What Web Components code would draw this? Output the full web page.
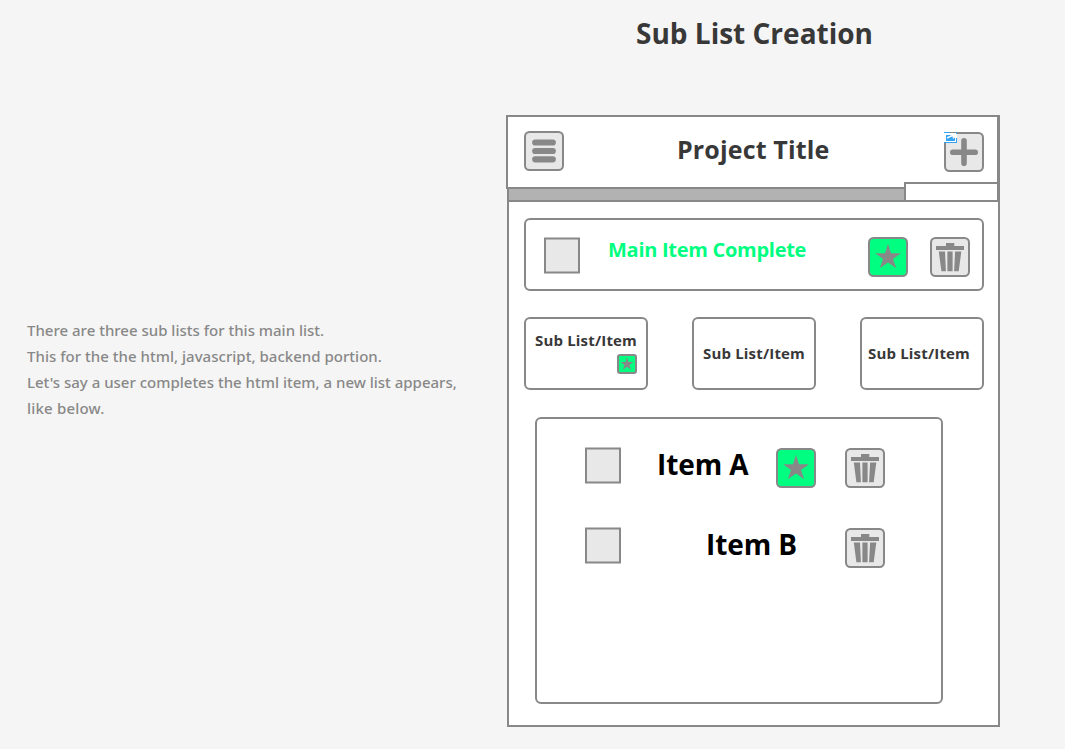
<!DOCTYPE html>
<html lang="en"><head><meta charset="utf-8"><title>Sub List Creation</title>
<style>html,body{margin:0}body{background:#f5f5f5;font-family:"Open Sans","Noto Sans",sans-serif}</style></head>
<body><sublist-page></sublist-page>
<script>
const define=(name,html,setup)=>{
  const t=document.createElement('template');t.innerHTML=html;
  customElements.define(name,class extends HTMLElement{
    constructor(){super();this.attachShadow({mode:'open'}).append(t.content.cloneNode(true));}
    connectedCallback(){if(setup)setup(this,this.shadowRoot);}
  });
};
const shapes={
  menu:'<path d="M11.2 11.5h17.6M11.2 20h17.6M11.2 28.3h17.6" stroke="#888" stroke-width="6.2" stroke-linecap="round"/>',
  plus:'<path d="M8.8 20.2h22.4M20 8.8v22.4" stroke="#888" stroke-width="5.6" stroke-linecap="round"/>',
  star:'<path d="M20 6.7 23 16.2H33L25 22 28.2 31.3 20 25.6 11.8 31.3 15 22 7.2 16.2H17Z" fill="#888"/>',
  trash:'<path d="M6 9h10V6h8.3v3H34v4H6ZM8.8 14.6h6.2L15.9 34.2H11.4ZM17.4 14.6h5.2v19.6h-5.2ZM25.1 14.6h6.2L28.7 34.2H24.1Z" fill="#888"/>'
};
define('tool-icon','<style>:host{display:block;flex:none;width:40px;height:40px}:host([small]){width:20px;height:20px}svg{display:block;width:100%;height:100%}</style><svg viewBox="0 0 40 40"></svg>',(el,r)=>{
  const k=el.getAttribute('kind'),s=el.hasAttribute('small');
  r.querySelector('svg').innerHTML=`<rect x="${s?2:1}" y="${s?2:1}" width="${s?36:38}" height="${s?36:38}" rx="4.5" fill="${k==='star'?'#00ff80':'#e8e8e8'}" stroke="#888" stroke-width="${s?4:2}"/>`+shapes[k];
});
define('check-box','<style>:host{display:block;flex:none;width:36px;height:37px}svg{display:block}</style><svg width="36" height="37"><rect x="1" y="1.5" width="34" height="34" fill="#e8e8e8" stroke="#888" stroke-width="2"/></svg>');
define('text-label','<style>:host{display:block;flex:none;white-space:nowrap;font-weight:700;color:#383838}</style><slot></slot>');
define('outline-card','<style>:host{display:block;box-sizing:border-box;border:2px solid #888;border-radius:6px;background:#fff}</style><slot></slot>');
define('link-badge','<style>:host{display:block;width:13px;height:11px}svg{display:block}</style><svg width="13" height="11"><path fill="#fff" d="M0 1h13v10H0z"/><path fill="#33a3f4" d="M0 0h6v1H0zM0 10h13v1H0zM12 6h1v5h-1zM12 0h1v2h-1zM2 3h9v6H2z"/><path d="M3 5.8C5 6 6 3.6 9 3.8" fill="none" stroke="#fff" stroke-width="1.6"/><path d="M8 1l4.5 3L9 7z" fill="#fff"/></svg>');
define('progress-track',`<style>:host{display:flex;align-items:flex-end;height:20px}
.done{flex:none;box-sizing:border-box;width:397px;height:15px;background:#b2b2b2;border:2px solid #888;border-right:0}
.rest{flex:none;box-sizing:border-box;width:95px;height:20px;background:#fff;border:2px solid #888}</style><div class="done"></div><div class="rest"></div>`);
define('project-header',`<style>:host{display:flex;align-items:flex-start;box-sizing:border-box;width:493px;height:74px;border:2px solid #888;background:#fff;padding:14px 13px 0 16px}
text-label{font-size:25px;line-height:34px;margin:1px 0 0 113px;letter-spacing:var(--ls-project)}
.add{position:relative;margin:1px 0 0 auto}.add link-badge{position:absolute;left:0;top:0}</style>
<tool-icon kind="menu"></tool-icon><text-label>Project Title</text-label><div class="add"><tool-icon kind="plus"></tool-icon><link-badge></link-badge></div>`);
define('main-item',`<style>outline-card{width:460px;height:73px}.r{display:flex;align-items:flex-start;padding:17px 12px 0 18px}
text-label{font-size:20px;line-height:28px;color:#00ff80;margin:-1px 0 0 28px;width:200px;letter-spacing:var(--ls-main)}.s{margin-left:auto}.t{margin-left:22px}:host{display:block}</style>
<outline-card><div class="r"><check-box></check-box><text-label>Main Item Complete</text-label><tool-icon class="s" kind="star"></tool-icon><tool-icon class="t" kind="trash"></tool-icon></div></outline-card>`);
define('sub-item',`<style>:host{display:block}outline-card{width:124px;height:73px}text-label{font-size:15px;line-height:22px;margin:23px 0 0 9px;letter-spacing:var(--ls-sub)}
:host([starred]) text-label{margin-top:10px}tool-icon{display:none}:host([starred]) tool-icon{display:block;margin:3px 0 0 91px}:host([last]) text-label{margin-left:6px}</style>
<outline-card style="display:flow-root"><text-label>Sub List/Item</text-label><tool-icon small kind="star"></tool-icon></outline-card>`);
define('list-row',`<style>:host{display:flex;align-items:flex-start;height:80px;padding:0 56px 0 48px}
text-label{font-size:28px;line-height:38px;color:#000;margin:-2px 0 0 36px;width:92px;letter-spacing:var(--ls-item)}
:host(:not([starred])) text-label{margin-left:85px}.s{margin:1px 0 0 27px}:host(:not([starred])) .s{display:none}.t{margin:1px 0 0 auto}</style>
<check-box></check-box><text-label><slot></slot></text-label><tool-icon class="s" kind="star"></tool-icon><tool-icon class="t" kind="trash"></tool-icon>`);
define('project-board',`<style>:host{display:block;box-sizing:border-box;width:493px;height:612px;border:2px solid #888;background:#fff}
project-header{margin:-2px 0 0 -3px}progress-track{margin:-7px 0 0 -2px}main-item{margin:16px 0 0 15px}.subs{display:flex;gap:44px;margin:26px 0 0 15px}
.list{width:408px;height:287px;margin:27px 0 0 26px}.rows{padding-top:28px}</style>
<project-header></project-header><progress-track></progress-track><main-item></main-item>
<div class="subs"><sub-item starred></sub-item><sub-item></sub-item><sub-item last></sub-item></div>
<outline-card class="list"><div class="rows"><list-row starred>Item A</list-row><list-row>Item B</list-row></div></outline-card>`);
define('flow-note',`<style>:host{display:block;width:480px;color:#888;font-family:"Noto Sans",sans-serif;font-size:15px;font-weight:500;line-height:26px;white-space:nowrap}div{letter-spacing:var(--l,0)}</style>
<div>There are three sub lists for this main list.</div><div style="--l:0.02px">This for the the html, javascript, backend portion.</div><div>Let's say a user completes the html item, a new list appears,</div><div style="--l:0.2px">like below.</div>`);
define('sublist-page',`<style>:host{display:grid;grid-template-columns:480px 493px;height:749px;align-items:start;overflow:hidden;padding-left:27px;box-sizing:border-box;
--ls-project:0.15px;--ls-main:-0.28px;--ls-sub:0.17px;--ls-item:-0.1px}
flow-note{margin-top:317px}.title{font-size:28px;line-height:38px;margin:14px 0 0 129px}project-board{margin-top:63px}</style>
<flow-note></flow-note><div><text-label class="title">Sub List Creation</text-label><project-board></project-board></div>`);
</script></body></html>
